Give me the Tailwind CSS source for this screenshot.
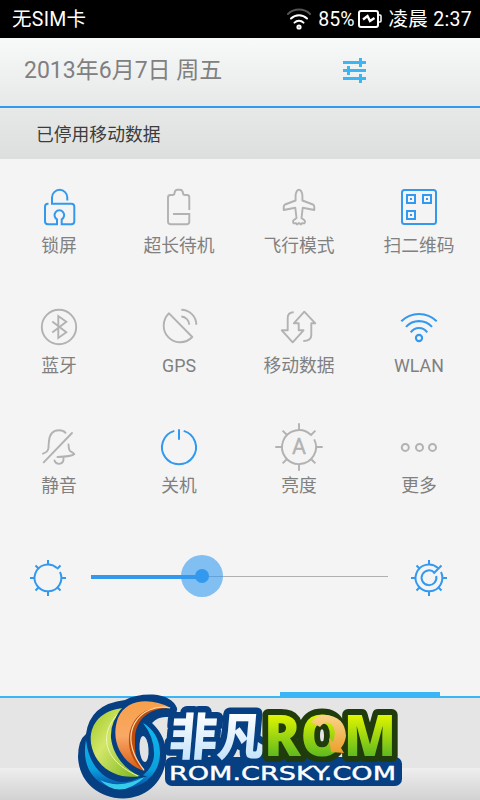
<!DOCTYPE html>
<html lang="zh-CN">
<head>
  <meta charset="UTF-8">
  <meta name="viewport" content="width=device-width, initial-scale=1.0">
  <title>快捷设置</title>
  <script src="https://cdn.jsdelivr.net/npm/@tailwindcss/browser@4"></script>
</head>
<body class="bg-[#f4f4f4] font-['Roboto','Noto_Sans_CJK_SC',sans-serif]">
  <div class="relative flex h-[800px] w-[480px] flex-col overflow-hidden">

    <!-- Status bar -->
    <div class="flex h-[38px] shrink-0 items-center bg-black pt-0.5 pr-[8px] pl-3 text-[19.500px] text-white">
      <span class="mr-auto tracking-[0.3px]">无SIM卡</span>
      <svg class="mr-[7px] h-6 w-6" viewBox="0 0 24 24" fill="none" stroke="#fff" stroke-width="2" stroke-linecap="round">
        <path d="M1 6A16 16 0 0 1 23 6" stroke="#555" />
        <path d="M4 10.500A11.500 11.500 0 0 1 20 10.500" />
        <path d="M7.500 14.600A6.500 6.500 0 0 1 16.500 14.600" />
        <circle cx="12" cy="19" r="1.600" />
      </svg>
      <span>85%</span>
      <svg class="mr-[6px] mb-0.5 ml-[4px] h-[18px] w-6" viewBox="0 0 24 18" fill="none" stroke="#fff" stroke-width="2">
        <rect x="1" y="1" width="19" height="16" rx="2" />
        <path d="M20.500 5H22q1 0 1 1v5q0 1-1 1h-1.500" stroke-width="1.500" />
        <path d="M5 9.500L9.500 6L12 11L16.500 8" stroke-width="2.400" />
      </svg>
      <span class="tracking-[0.3px]">凌晨 2:37</span>
    </div>

    <!-- Date header -->
    <header class="flex h-[70px] shrink-0 items-center border-b-2 border-[#3399ee] bg-linear-to-b from-[#f8faf9] to-[#e7e9e8] pb-1 pl-6">
      <span class="mt-[3px] w-[318px] text-[23px] text-[#808080]">2013年6月7日 周五</span>
      <svg class="h-[26px] w-6" viewBox="0 0 24 26" stroke="#3ab6f5" stroke-width="3" fill="none">
        <path d="M1 5.500H24M1 13.500H24M1 21.500H24" />
        <path d="M18.500 1V10M6.500 9V18M18.500 17V26" />
      </svg>
    </header>
    <div class="flex h-[51px] shrink-0 items-center bg-linear-to-b from-[#e7e9e8] to-[#dddfde] pt-[3px] pl-[36px] text-[17.800px] text-[#3c3c3c]">已停用移动数据</div>

    <!-- Toggles -->
    <div class="-ml-px grid w-[480px] shrink-0 grid-cols-4 text-center text-[17.800px] leading-[29px] text-[#808080]">
      <div class="flex h-[120px] flex-col items-center pt-6">
        <svg class="size-12 shrink-0" viewBox="0 0 48 48" fill="none" stroke="#3399ee" stroke-width="2">
          <path d="M13.500 20.700H13Q10 20.700 10 23.700V38.300Q10 41.300 13 41.300H22V36.300A4.800 4.800 0 1 1 26.700 36.300V41.300H36.300Q39.300 41.300 39.300 38.300V23.700Q39.300 20.700 36.300 20.700H17V14.500A7.650 7.650 0 0 1 32.300 14.500V17.500" />
        </svg>
        <span>锁屏</span>
      </div>
      <div class="flex h-[120px] flex-col items-center pt-6">
        <svg class="size-12 shrink-0" viewBox="0 0 48 48" fill="none" stroke="#b2b2b2" stroke-width="1.900">
          <path d="M34.300 27V14.500Q34.300 12 32 12H30Q28 12 28 10Q27.500 6.700 25 6.700H22.500Q20 6.700 19.500 10Q19.500 12 17.500 12H15.500Q13 12 13 14.500V38.500Q13 41.300 16 41.300H31.500Q34.300 41.300 34.300 38.500V31H18" />
        </svg>
        <span>超长待机</span>
      </div>
      <div class="flex h-[120px] flex-col items-center pt-6">
        <svg class="size-12 shrink-0" viewBox="0 0 48 48" fill="none" stroke="#b2b2b2" stroke-width="1.900" stroke-linejoin="round">
          <path d="M24 6.700Q21.500 6.700 20.600 12V17.500L10 21.500Q8.700 22.300 8.700 24V27L20.300 24.800L21.500 35L18.300 37.500Q17.500 39 18.600 40.300L21 40.200L22 41.500L24 40L26 41.500L27 40.200L29.400 40.300Q30.500 39 29.700 37.500L26.500 35L27.700 24.800L39.300 27V24Q39.300 22.300 38 21.500L27.400 17.500V12Q26.500 6.700 24 6.700Z" />
        </svg>
        <span>飞行模式</span>
      </div>
      <div class="flex h-[120px] flex-col items-center pt-6">
        <svg class="size-12 shrink-0" viewBox="0 0 48 48" fill="none" stroke="#3399ee" stroke-width="2">
          <rect x="7" y="7" width="34" height="34" rx="2.500" />
          <path d="M12 12h8v8h-8zM28 12h8v8h-8zM12 28h8v8h-8z" />
          <path d="M15 16h2M31 16h2M15 32h2" />
        </svg>
        <span class="whitespace-nowrap">扫二维码</span>
      </div>

      <div class="flex h-[120px] flex-col items-center pt-6">
        <svg class="size-12 shrink-0" viewBox="0 0 48 48" fill="none" stroke="#b2b2b2" stroke-width="1.900">
          <circle cx="24" cy="24" r="17.200" />
          <path d="M17.300 18.500L31.300 29.300L23.300 35V13L31.300 18.800L17.300 29.500" />
        </svg>
        <span>蓝牙</span>
      </div>
      <div class="flex h-[120px] flex-col items-center pt-6">
        <svg class="size-12 shrink-0" viewBox="0 0 48 48" fill="none" stroke="#b2b2b2" stroke-width="1.900" stroke-linejoin="round">
          <path d="M14 10.300L37.300 34A17 17 0 0 1 24.500 39.200A16.500 16.500 0 0 1 8.700 22.700A17 17 0 0 1 14 10.300Z" />
          <path d="M26.300 13.500A8.500 8.500 0 0 1 34.300 21.700M26.300 6.700A15 15 0 0 1 41.300 21.700" />
        </svg>
        <span>GPS</span>
      </div>
      <div class="flex h-[120px] flex-col items-center pt-6">
        <svg class="size-12 shrink-0" viewBox="0 0 48 48" fill="none" stroke="#b2b2b2" stroke-width="1.900" stroke-linejoin="round">
          <path d="M18.700 9.300Q12.700 9.300 12.700 15V27.300H6.800L17.700 39.300L28.500 27.300H23.700V20.300H18.800L29.300 8.700L40.300 20.300H36.300V32Q36.300 38 28.300 38" />
        </svg>
        <span>移动数据</span>
      </div>
      <div class="flex h-[120px] flex-col items-center pt-6">
        <svg class="size-12 shrink-0" viewBox="0 0 48 48" fill="none" stroke="#3399ee" stroke-width="2.100">
          <path d="M6.300 18.300A25 25 0 0 1 41.700 18.300M11 23.900A17.500 17.500 0 0 1 37 23.900M15.800 29.300A10 10 0 0 1 32.200 29.300" />
          <circle cx="24" cy="35" r="3.100" />
        </svg>
        <span>WLAN</span>
      </div>

      <div class="flex h-[120px] flex-col items-center pt-6">
        <svg class="size-12 shrink-0" viewBox="0 0 48 48" fill="none" stroke="#b2b2b2" stroke-width="1.900" stroke-linecap="round" stroke-linejoin="round">
          <path d="M37 10L8.700 39.300" />
          <path d="M8 30.700Q13 29 13.500 25Q13.500 22 14 18Q15 7.300 24 7.300Q28.500 7.300 30.500 9.800" />
          <path d="M33.500 21.500Q33.800 26.500 35 28Q38.500 30 39.300 31Q37 33.600 22.500 34" />
          <path d="M19.500 37.500Q20.500 40.800 24 40.900Q28.800 40.500 28.500 35.300" />
        </svg>
        <span>静音</span>
      </div>
      <div class="flex h-[120px] flex-col items-center pt-6">
        <svg class="size-12 shrink-0" viewBox="0 0 48 48" fill="none" stroke="#3399ee" stroke-width="2">
          <path d="M19.300 7.900A17 17 0 1 0 28.700 7.900M24 6.300V16.700" />
        </svg>
        <span>关机</span>
      </div>
      <div class="flex h-[120px] flex-col items-center pt-6">
        <svg class="size-12 shrink-0 overflow-visible" viewBox="0 0 48 48" fill="none" stroke="#b2b2b2" stroke-width="1.900">
          <path d="M36 12A17 17 0 1 0 39.200 16.400" />
          <path d="M24 .300V7M24 41V47.700M.300 24H7M41 24H47.700M7.600 7.600L12 12M40.400 7.600L35.500 12.500M7.600 40.400L12 36M40.400 40.400L36 36" />
          <text x="24" y="31" font-size="21.500" text-anchor="middle" fill="#b2b2b2" stroke="#b2b2b2" stroke-width=".3">A</text>
        </svg>
        <span>亮度</span>
      </div>
      <div class="flex h-[120px] flex-col items-center pt-6">
        <svg class="size-12 shrink-0" viewBox="0 0 48 48" fill="none" stroke="#b2b2b2" stroke-width="2">
          <circle cx="10.300" cy="24.400" r="3.500" />
          <circle cx="24.500" cy="24.400" r="3.500" />
          <circle cx="37.500" cy="24.400" r="3.500" />
        </svg>
        <span>更多</span>
      </div>
    </div>

    <!-- Brightness slider -->
    <div class="mt-[34px] flex h-12 shrink-0 items-center pr-[33px] pl-[30px]">
      <svg class="mt-[1px] size-9 shrink-0" viewBox="0 0 36 36" fill="none" stroke="#3399ee" stroke-width="2">
        <path d="M27 8A13.400 13.400 0 1 0 30 12" />
        <path d="M18 0V5M18 31V36M0 18H5M31 18H36M5.500 5.500L9 9M30.500 5.500L27 9M5.500 30.500L9 27M30.500 30.500L27 27" />
      </svg>
      <div class="relative mr-[23px] mb-0.5 ml-[25px] h-[42px] flex-1">
        <div class="absolute top-[21px] right-0 left-0 h-px bg-[#b0b0b0]"></div>
        <div class="absolute top-5 left-0 h-1 w-[111px] bg-[#3399ee]"></div>
        <div class="absolute top-0 left-[90px] flex size-[42px] items-center justify-center rounded-full bg-[#3399ee]/60">
          <div class="size-3.5 rounded-full bg-[#3399ee]"></div>
        </div>
      </div>
      <svg class="mt-[1px] size-9 shrink-0" viewBox="0 0 36 36" fill="none" stroke="#3399ee" stroke-width="2">
        <path d="M27 8A13.400 13.400 0 1 0 30 12" />
        <path d="M18 0V5M18 31V36M0 18H5M31 18H36M5.500 5.500L9 9M30.500 5.500L22.500 13.500M5.500 30.500L9 27M30.500 30.500L27 27" />
        <path d="M23.500 12.800A7.400 7.400 0 1 0 25.200 16" />
      </svg>
    </div>

    <!-- Bottom bar -->
    <div class="mt-auto ml-[280px] h-1 w-40 shrink-0 bg-[#3ab6f5]"></div>
    <div class="h-[72px] shrink-0 border-t-2 border-[#3ab6f5] bg-[#e5e5e5]"></div>
    <div class="h-8 shrink-0 bg-linear-to-b from-[#eeeeee] to-[#d2d2d2]"></div>

    <!-- Logo over the bottom bar -->
    <svg class="absolute bottom-0 left-[75px] h-[110px] w-[330px] font-['Noto_Sans_CJK_SC',sans-serif]" viewBox="75 690 330 110">
      <defs>
        <linearGradient id="green" x1="0" y1="0" x2="1" y2="1">
          <stop offset="0" stop-color="#9cc820" />
          <stop offset=".4" stop-color="#d3e66a" />
          <stop offset="1" stop-color="#79b51c" />
        </linearGradient>
        <linearGradient id="orange" x1="0" y1="0" x2="0" y2="1">
          <stop offset="0" stop-color="#f7a04a" />
          <stop offset=".5" stop-color="#f9a866" />
          <stop offset="1" stop-color="#d85a10" />
        </linearGradient>
        <linearGradient id="cyan" x1="0" y1="0" x2="0" y2="1">
          <stop offset="0" stop-color="#10b8f0" />
          <stop offset=".7" stop-color="#0ba0de" />
          <stop offset="1" stop-color="#0648a0" />
        </linearGradient>
        <linearGradient id="ice" x1="0" y1="0" x2="0" y2="1">
          <stop offset=".2" stop-color="#fff" />
          <stop offset="1" stop-color="#b9defa" />
        </linearGradient>
        <linearGradient id="lime" x1="0" y1="715" x2="0" y2="757" gradientUnits="userSpaceOnUse">
          <stop offset="0" stop-color="#e0f500" />
          <stop offset="1" stop-color="#5cb820" />
        </linearGradient>
        <linearGradient id="gold" x1="0" y1="715" x2="0" y2="757" gradientUnits="userSpaceOnUse">
          <stop offset="0" stop-color="#fbd48a" />
          <stop offset="1" stop-color="#e89a20" />
        </linearGradient>
      </defs>

      <path d="M125 700Q136 694 153 694.500Q172 696 177 708Q178 716 168 717Q158 716 152 723Q168 738 166 760C163 783 146 798 123 798.500C97 798 79 781 78 757Q78 740 86 734Q90 704 125 700Z" fill="#063f82" />
      <path d="M86 740C80 772 100 789 122 789C146 788 160 772 160 753C160 738 152 728 143 723Q155 738 154 756C152 772 138 782 122 782C105 781 89 767 86 740Z" fill="url(#cyan)" />
      <path d="M100 780Q120 790 146 776Q120 801 100 780Z" fill="#36cbe8" />
      <ellipse cx="144" cy="749" rx="4.500" ry="13" transform="rotate(-4 144 749)" fill="#e0e2e4" />
      <path d="M124 708C96 710 87 731 92 748C98 770 120 780 140 776C125 770 113 755 111 738Q110 720 124 708Z" fill="url(#green)" stroke="#063f82" stroke-width="4" paint-order="stroke" />
      <path d="M122 710C102 727 96 757 138 776" fill="none" stroke="#eff6b8" stroke-width="1" />
      <path d="M171 708C150 697 126 699 118 718C109 743 124 765 145 771C133 760 132 749 133 736C135 719 149 706 171 708Z" fill="url(#orange)" stroke="#063f82" stroke-width="4" paint-order="stroke" />
      <path d="M170 708C143 704 130 720 129 738C128 751 134 764 144 771C134 758 135 750 135 738C136 720 148 708 170 708Z" fill="#bd4c10" />
      <path d="M170 708C141 702 114 733 144 770" fill="none" stroke="#ffd8a0" stroke-width="1.200" />

      <rect x="165" y="757" width="237" height="29" rx="7" fill="#063f82" />
      <g font-weight="900" font-size="50" fill="url(#ice)" stroke="#063f82" stroke-width="13" stroke-linejoin="round" paint-order="stroke">
        <text transform="translate(168 755) skewX(-5)" textLength="96" lengthAdjust="spacingAndGlyphs">非凡</text>
      </g>
      <g font-family="Open Sans" font-weight="800" font-size="56" fill="url(#lime)" stroke="#213c0c" stroke-width="12" stroke-linejoin="round" paint-order="stroke">
        <text x="264" y="756" textLength="132" lengthAdjust="spacingAndGlyphs">ROM</text>
      </g>
      <!-- gold arrow curling round the right half of the O -->
      <path d="M311 722Q317 715 325 715Q345 716 346 736Q345 743 341 748L344 753L331 752L329 738L333 742Q337 730 332 725Q326 719 320 727Z" fill="url(#gold)" />
      <rect x="168" y="762" width="231" height="21" rx="4" fill="#063f82" />
      <text x="169" y="780" font-family="DejaVu Sans" font-size="19" fill="#fff" stroke="#fff" stroke-width=".4" textLength="227" lengthAdjust="spacingAndGlyphs">ROM.CRSKY.COM</text>
    </svg>
  </div>
</body>
</html>
